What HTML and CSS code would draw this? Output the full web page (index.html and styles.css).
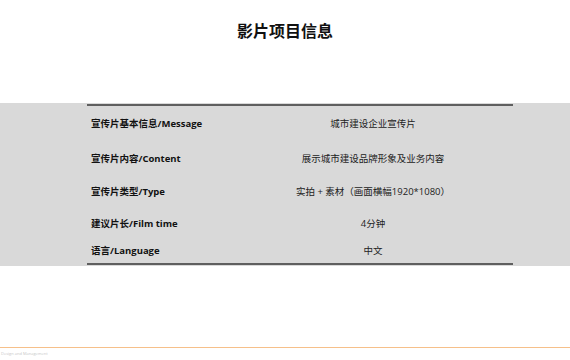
FILE: index.html
```html
<!DOCTYPE html>
<html lang="zh-CN">

<head>
    <meta charset="UTF-8">
    <meta name="viewport" content="width=device-width, initial-scale=1.0">
    <title>影片项目信息</title>
    <link rel="stylesheet" href="styles.css">
</head>

<body>
    <header class="page-head">
        <h1>影片项目信息</h1>
    </header>

    <section class="info-band">
        <table class="info-table">
            <tr class="row-1">
                <th>宣传片基本信息/Message</th>
                <td>城市建设企业宣传片</td>
            </tr>
            <tr class="row-2">
                <th>宣传片内容/Content</th>
                <td>展示城市建设品牌形象及业务内容</td>
            </tr>
            <tr class="row-3">
                <th>宣传片类型/Type</th>
                <td>实拍&nbsp;+&nbsp;素材（画面横幅1920*1080）</td>
            </tr>
            <tr class="row-4">
                <th>建议片长/Film time</th>
                <td>4分钟</td>
            </tr>
            <tr class="row-5">
                <th>语言/Language</th>
                <td>中文</td>
            </tr>
        </table>
    </section>

    <footer class="page-foot">
        <span>Design and Management</span>
    </footer>
</body>

</html>
```

FILE: styles.css
```css
body {
    margin: 0;
    width: 570px;
    height: 360px;
    font-family: "Open Sans", "Noto Sans CJK SC", sans-serif;
    color: #111;
    background-color: #fff;
    overflow: hidden;
}

.page-head {
    height: 103px;
    display: flex;
    justify-content: center;
}

.page-head h1 {
    margin: 20px 0 0;
    font-family: "Noto Sans CJK SC", sans-serif;
    font-size: 16px;
    font-weight: 700;
    line-height: 20px;
}

.info-band {
    height: 163px;
    background-color: #d9d9d9;
    padding-top: 1px;
    box-sizing: border-box;
}

.info-table {
    margin-left: 87px;
    width: 426px;
    border-collapse: collapse;
    border-top: 2px solid #5f5f5f;
    border-bottom: 2px solid #5f5f5f;
}

.info-table th,
.info-table td {
    padding: 0;
    font-size: 9.5px;
    line-height: 14px;
}

.info-table th {
    width: 146px;
    padding-left: 4px;
    text-align: left;
    font-weight: 700;
    box-sizing: border-box;
}

.info-table td {
    text-align: center;
    font-weight: 400;
    color: #222;
}

.row-1 { height: 37px; }
.row-2 { height: 33px; }
.row-3 { height: 33px; }
.row-4 { height: 31px; }
.row-5 { height: 25px; }

.page-foot {
    margin-top: 81px;
    border-top: 1px solid #f6c08a;
    padding: 3px 0 0 1px;
    font-size: 4px;
    color: #c8c8c8;
}
```
